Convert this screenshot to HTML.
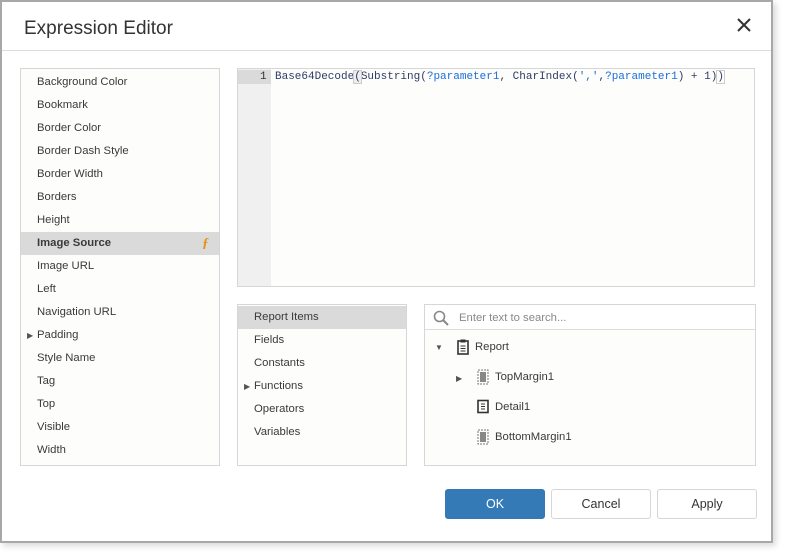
<!DOCTYPE html>
<html><head><meta charset="utf-8"><style>
*{box-sizing:border-box;margin:0;padding:0}
body{width:789px;height:559px;background:#fff;position:relative;overflow:hidden;font-family:"Liberation Sans",sans-serif;font-size:11.3px;color:#3a3a3a}
.dlg{position:absolute;left:0;top:0;width:773px;height:543px;background:#fff;border:2px solid #a8a8a8;box-shadow:3px 3px 6px rgba(0,0,0,.15)}
.a{position:absolute}
.title{left:22px;top:16px;font-size:19px;color:#333}
.hline{left:0;top:48px;width:769px;height:1px;background:#ddd}
.box{border:1px solid #d6d6d6;background:#fdfdfc}
.row{position:absolute;left:0;right:0;height:23px;line-height:23px;padding-left:16px;white-space:nowrap}
.sel{background:#dadadb}
.tri{position:absolute;left:6px;font-size:8px;color:#555}
.code{font-family:"Liberation Mono",monospace;font-size:11px;color:#2f3c66;white-space:pre}
.btn{position:absolute;top:487px;width:100px;height:30px;border:1px solid #d6d6d6;border-radius:3px;text-align:center;line-height:28px;font-size:12.5px;color:#333;background:#fff}
.ti{position:absolute;white-space:nowrap;line-height:16px}
</style></head><body>
<div class="dlg">
<div class="a title">Expression Editor</div>
<svg class="a" style="left:735px;top:16px" width="14" height="14"><path d="M1 1L13 13M13 1L1 13" stroke="#333" stroke-width="2"/></svg>
<div class="a hline"></div>

<div class="a box" style="left:18px;top:66px;width:200px;height:398px">
<div class="row" style="top:2px">Background Color</div>
<div class="row" style="top:25px">Bookmark</div>
<div class="row" style="top:48px">Border Color</div>
<div class="row" style="top:71px">Border Dash Style</div>
<div class="row" style="top:94px">Border Width</div>
<div class="row" style="top:117px">Borders</div>
<div class="row" style="top:140px">Height</div>
<div class="row sel" style="top:163px;font-weight:bold">Image Source<span style="position:absolute;right:10px;color:#e8901a;font-style:italic;font-family:'Liberation Serif',serif;font-size:14px;font-weight:bold">ƒ</span></div>
<div class="row" style="top:186px">Image URL</div>
<div class="row" style="top:209px">Left</div>
<div class="row" style="top:232px">Navigation URL</div>
<div class="row" style="top:255px"><span class="tri">▶</span>Padding</div>
<div class="row" style="top:278px">Style Name</div>
<div class="row" style="top:301px">Tag</div>
<div class="row" style="top:324px">Top</div>
<div class="row" style="top:347px">Visible</div>
<div class="row" style="top:370px">Width</div>
</div>

<div class="a box" style="left:235px;top:66px;width:518px;height:219px">
<div class="a" style="left:0;top:0;width:33px;height:217px;background:#f0f0f0"></div>
<div class="a" style="left:0;top:1px;width:33px;height:14px;background:#dadada"></div>
<div class="a code" style="left:22px;top:2px;color:#333">1</div>
<div class="a code" style="left:37px;top:2px">Base64Decode<span style="background:#eee;outline:1px solid #ccc">(</span>Substring(<span style="color:#1a6fd8">?parameter1</span>, CharIndex(<span style="color:#1a6fd8">','</span>,<span style="color:#1a6fd8">?parameter1</span>) + 1)<span style="outline:1px solid #ccc">)</span></div>
</div>

<div class="a box" style="left:235px;top:302px;width:170px;height:162px">
<div class="row sel" style="top:1px">Report Items</div>
<div class="row" style="top:24px">Fields</div>
<div class="row" style="top:47px">Constants</div>
<div class="row" style="top:70px"><span class="tri">▶</span>Functions</div>
<div class="row" style="top:93px">Operators</div>
<div class="row" style="top:116px">Variables</div>
</div>

<div class="a box" style="left:422px;top:302px;width:332px;height:162px">
<div class="a" style="left:0;top:0;right:0;height:25px;border-bottom:1px solid #ddd;background:#fff"></div>
<svg class="a" style="left:8px;top:5px" width="16" height="16"><circle cx="6.5" cy="6.5" r="5" fill="none" stroke="#888" stroke-width="1.6"/><path d="M10 10L15 15" stroke="#888" stroke-width="2"/></svg>
<div class="ti" style="left:34px;top:5px;color:#888">Enter text to search...</div>
<div class="ti" style="left:10px;top:35px;font-size:8px;color:#555">▼</div>
<svg class="a" style="left:32px;top:34px" width="12" height="16"><rect x="1" y="2" width="10" height="13" fill="none" stroke="#333" stroke-width="1.6"/><rect x="3.5" y="0.5" width="5" height="3" fill="#333"/><path d="M3.5 7h5M3.5 9.5h5M3.5 12h5" stroke="#333"/></svg>
<div class="ti" style="left:50px;top:34px">Report</div>
<div class="ti" style="left:31px;top:66px;font-size:8px;color:#555">▶</div>
<svg class="a" style="left:52px;top:64px" width="12" height="16"><rect x="1" y="1" width="10" height="14" fill="none" stroke="#777" stroke-dasharray="2 1"/><rect x="3" y="3" width="6" height="10" fill="#888"/></svg>
<div class="ti" style="left:70px;top:64px">TopMargin1</div>
<svg class="a" style="left:52px;top:94px" width="12" height="16"><rect x="1" y="1.5" width="10" height="12" fill="none" stroke="#333" stroke-width="1.6"/><path d="M4 5h4M4 7.5h4M4 10h4" stroke="#333"/></svg>
<div class="ti" style="left:70px;top:94px">Detail1</div>
<svg class="a" style="left:52px;top:124px" width="12" height="16"><rect x="1" y="1" width="10" height="14" fill="none" stroke="#777" stroke-dasharray="2 1"/><rect x="3" y="3" width="6" height="10" fill="#888"/></svg>
<div class="ti" style="left:70px;top:124px">BottomMargin1</div>
</div>

<div class="btn" style="left:443px;background:#337ab7;border-color:#337ab7;color:#fff">OK</div>
<div class="btn" style="left:549px">Cancel</div>
<div class="btn" style="left:655px">Apply</div>
</div>
</body></html>
